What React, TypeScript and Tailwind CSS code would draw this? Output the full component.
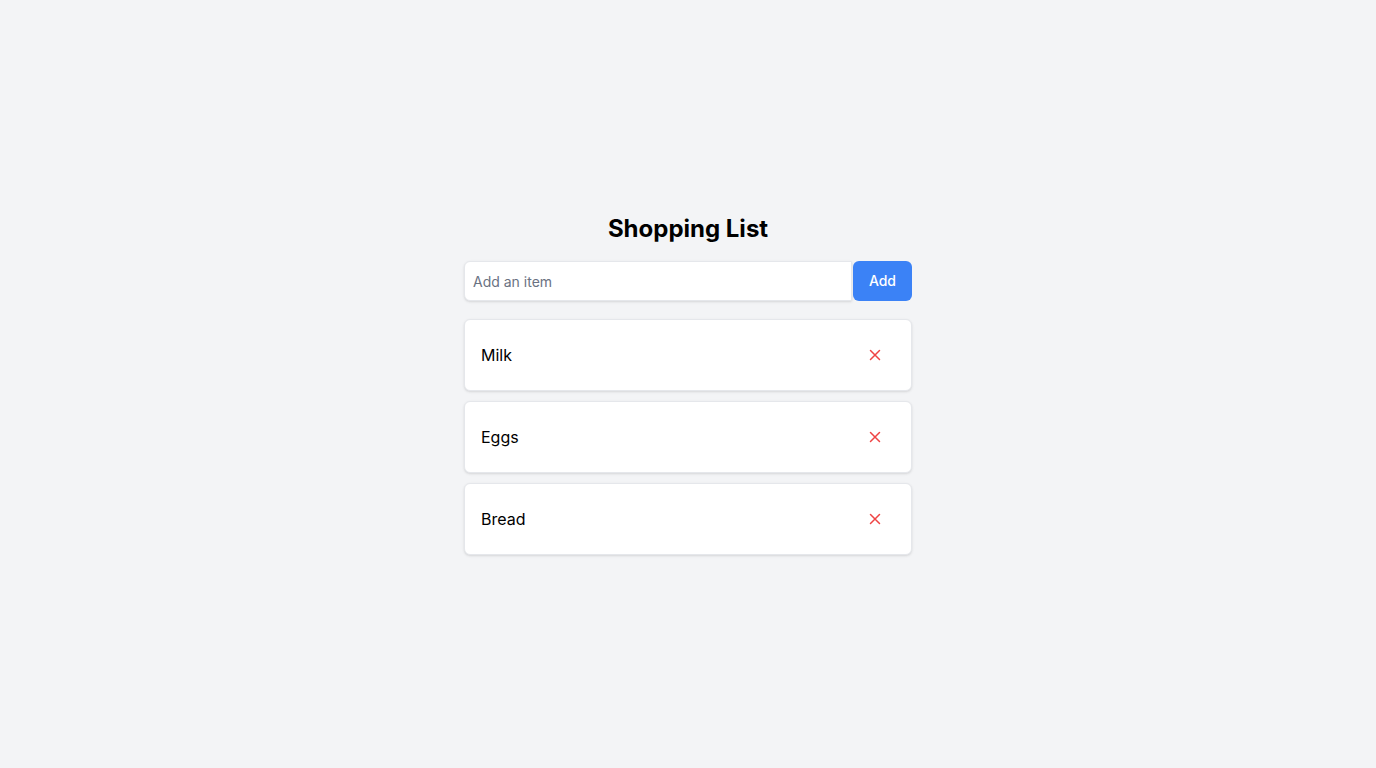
import { useState } from "react";

export default function App() {
  const [items, setItems] = useState<string[]>(["Milk", "Eggs", "Bread"]);
  const [value, setValue] = useState("");

  const add = () => {
    if (!value.trim()) return;
    setItems([...items, value.trim()]);
    setValue("");
  };

  return (
    <div className="flex min-h-screen items-center justify-center bg-gray-100 font-['Inter',sans-serif]">
      <div className="w-full max-w-md">
        <h1 className="mb-4 text-center text-2xl font-bold text-black">Shopping List</h1>
        <div className="mb-[18px] flex">
          <input
            value={value}
            onChange={(e) => setValue(e.target.value)}
            placeholder="Add an item"
            className="h-10 flex-1 rounded-l-md border border-gray-200 bg-white px-2 text-sm text-black shadow-sm outline-none placeholder:text-gray-500"
          />
          <button
            onClick={add}
            className="ml-px h-10 rounded-md bg-[#3b82f6] px-4 text-sm font-medium text-white"
          >
            Add
          </button>
        </div>
        <ul className="flex flex-col gap-[10px]">
          {items.map((item, i) => (
            <li
              key={item + i}
              className="flex h-[72px] items-center justify-between rounded-md border border-gray-200 bg-white px-4 shadow-sm"
            >
              <span className="text-base text-black">{item}</span>
              <button
                onClick={() => setItems(items.filter((_, j) => j !== i))}
                className="flex h-10 w-10 items-center justify-center text-[#ef4444]"
              >
                <svg width="12" height="12" viewBox="0 0 12 12" fill="none" stroke="currentColor" strokeWidth="1.5" strokeLinecap="round">
                  <path d="M1.5 1.5l9 9M10.5 1.5l-9 9" />
                </svg>
              </button>
            </li>
          ))}
        </ul>
      </div>
    </div>
  );
}
